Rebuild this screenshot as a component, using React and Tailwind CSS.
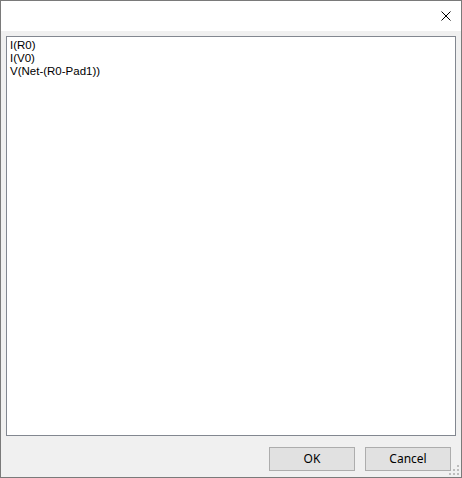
import React from 'react';

const signals = ['I(R0)', 'I(V0)', 'V(Net-(R0-Pad1))'];

const Grip = () => (
  <svg className="absolute right-[1px] bottom-[1px]" width="11" height="11" viewBox="0 0 11 11">
    {[
      [8, 0],
      [4, 4],
      [8, 4],
      [0, 8],
      [4, 8],
      [8, 8],
    ].map(([x, y]) => (
      <rect key={`${x}-${y}`} x={x} y={y} width="2" height="2" fill="#bcbcbc" />
    ))}
  </svg>
);

const App = () => {
  return (
    <div
      className="relative w-[462px] h-[478px] border border-[#7a7a7a] bg-[#f0f0f0] flex flex-col text-[12px] text-black"
      style={{ fontFamily: '"Segoe UI", "Noto Sans", "Open Sans", sans-serif' }}
    >
      <div className="h-[30px] shrink-0 bg-white flex justify-end items-center pr-[10px]">
        <svg width="10" height="10" viewBox="0 0 10 10" className="mt-[-1px]">
          <path d="M0.5 0.5 L9.5 9.5 M9.5 0.5 L0.5 9.5" stroke="#000" strokeWidth="1" />
        </svg>
      </div>
      <div className="flex flex-col grow px-[5px] pt-[5px]">
        <div
          className="h-[400px] bg-white border border-[#828790] px-[3px] pt-[2px] text-[11.5px] leading-[13px]"
          style={{ fontFamily: '"Liberation Sans", Arial, sans-serif' }}
        >
          {signals.map((s) => (
            <p key={s} className="h-[13px]">{s}</p>
          ))}
        </div>
        <div className="flex justify-end gap-[10px] mt-[11px] pr-[5px]">
          <button className="w-[86px] h-[24px] bg-[#e1e1e1] border border-[#adadad] leading-none">
            OK
          </button>
          <button className="w-[86px] h-[24px] bg-[#e1e1e1] border border-[#adadad] leading-none">
            Cancel
          </button>
        </div>
      </div>
      <Grip />
    </div>
  );
};

export default App;
